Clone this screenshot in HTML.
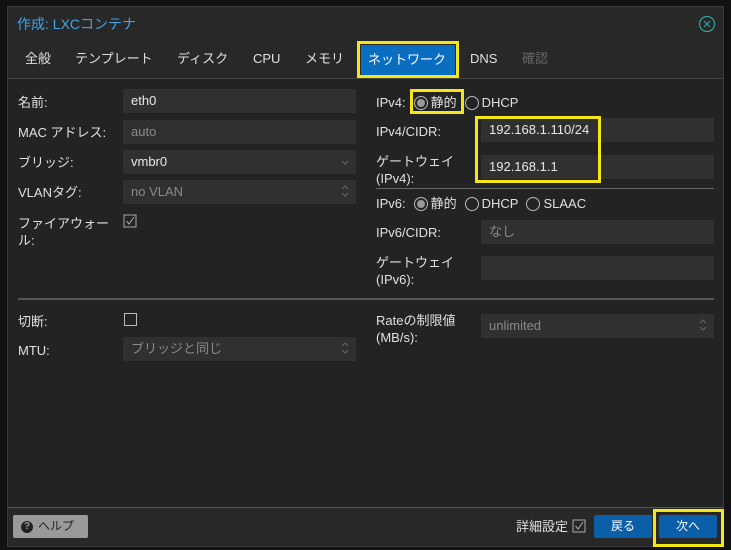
<!DOCTYPE html>
<html><head><meta charset="utf-8"><style>
*{box-sizing:border-box;margin:0;padding:0}
body{width:731px;height:550px;background:#121212;font-family:"Liberation Sans","Noto Sans CJK JP",sans-serif;font-size:13px;color:#e0e0e0;position:relative;overflow:hidden}
.a{position:absolute}
.dlg{left:7px;top:6px;width:717px;height:541px;background:#282828;border:1px solid #3a3a3a}
.in{position:absolute;height:24px;background:#303030;padding-left:8px;line-height:24px;font-size:13px;color:#e8e8e8;overflow:hidden}
.dim{color:#8a8a8a}
.lbl{position:absolute;color:#e0e0e0;font-size:13px;line-height:17px}
.tab{position:absolute;top:44px;height:30px;line-height:30px;font-size:13px;color:#e0e0e0}
.radio{display:inline-block;width:14px;height:14px;border:1px solid #bbb;border-radius:50%;vertical-align:-2px;position:relative;margin-right:3px}
.radio.on::after{content:"";position:absolute;left:2px;top:2px;width:8px;height:8px;border-radius:50%;background:#999}
.chk{position:absolute;width:13px;height:13px;border:1px solid #bbb}
.yb{position:absolute;border:3px solid #f5e61a}
.sp{position:absolute;right:6px;top:5px}
.row{display:flex;align-items:center;height:17px}
.row span.t{margin-right:8px}
</style></head><body>
<div class="a dlg"></div>
<div class="a" style="left:17px;top:15px;font-size:14px;line-height:18px;color:#3fa3e6">作成: LXCコンテナ</div>
<svg class="a" style="left:698px;top:15px" width="18" height="18"><circle cx="9" cy="9" r="7.5" fill="none" stroke="#2aa7a0" stroke-width="1.2"/><path d="M6 6L12 12M12 6L6 12" stroke="#2aa7a0" stroke-width="1.2"/></svg>
<div class="tab" style="left:25px">全般</div>
<div class="tab" style="left:75px">テンプレート</div>
<div class="tab" style="left:177px">ディスク</div>
<div class="tab" style="left:253px">CPU</div>
<div class="tab" style="left:305px">メモリ</div>
<div class="a" style="left:361px;top:45px;width:94px;height:30px;background:#0a6ec0"></div>
<div class="tab" style="left:368px;top:45px;color:#fff">ネットワーク</div>
<div class="tab" style="left:470px">DNS</div>
<div class="tab" style="left:522px;color:#666">確認</div>
<div class="a" style="left:8px;top:78px;width:715px;height:1px;background:#444"></div>
<div class="a" style="left:8px;top:79px;width:715px;height:428px;background:#232323"></div>

<svg width="0" height="0" style="position:absolute"><defs><g id="sp"><path d="M1 4L4 1L7 4M1 8L4 11L7 8" fill="none" stroke="#666" stroke-width="1"/></g></defs></svg>

<div class="lbl" style="left:18px;top:94px">名前:</div><div class="in" style="left:123px;top:89px;width:233px">eth0</div>
<div class="lbl" style="left:18px;top:124px">MAC アドレス:</div><div class="in dim" style="left:123px;top:120px;width:233px">auto</div>
<div class="lbl" style="left:18px;top:154px">ブリッジ:</div><div class="in" style="left:123px;top:150px;width:233px">vmbr0<svg class="sp" width="9" height="14"><path d="M1 6L4 9L7 6" fill="none" stroke="#666"/></svg></div>
<div class="lbl" style="left:18px;top:184px">VLANタグ:</div><div class="in dim" style="left:123px;top:180px;width:233px">no VLAN<svg class="sp" width="9" height="13"><use href="#sp"/></svg></div>
<div class="lbl" style="left:18px;top:215px">ファイアウォー<br>ル:</div>
<svg class="a" style="left:123px;top:214px" width="15" height="15"><rect x="1" y="1" width="12" height="12" fill="none" stroke="#aaa"/><path d="M3.5 7L6 10L11 3" fill="none" stroke="#aaa"/></svg>
<div class="a" style="left:18px;top:298px;width:696px;height:2px;background:#555"></div>
<div class="lbl" style="left:18px;top:313px">切断:</div><div class="chk" style="left:124px;top:313px"></div>
<div class="lbl" style="left:18px;top:342px">MTU:</div><div class="in dim" style="left:123px;top:337px;width:233px">ブリッジと同じ<svg class="sp" width="9" height="13"><use href="#sp"/></svg></div>

<div class="lbl row" style="left:376px;top:94px"><span class="t">IPv4:</span><span class="radio on"></span><span class="t">静的</span><span class="radio"></span><span>DHCP</span></div>
<div class="lbl" style="left:376px;top:123px">IPv4/CIDR:</div><div class="in" style="left:481px;top:118px;width:233px">192.168.1.110/24</div>
<div class="lbl" style="left:376px;top:153px">ゲートウェイ<br>(IPv4):</div><div class="in" style="left:481px;top:155px;width:233px">192.168.1.1</div>
<div class="a" style="left:376px;top:188px;width:338px;height:1px;background:#666"></div>
<div class="lbl row" style="left:376px;top:195px"><span class="t">IPv6:</span><span class="radio on"></span><span class="t">静的</span><span class="radio"></span><span class="t">DHCP</span><span class="radio"></span><span>SLAAC</span></div>
<div class="lbl" style="left:376px;top:224px">IPv6/CIDR:</div><div class="in dim" style="left:481px;top:220px;width:233px">なし</div>
<div class="lbl" style="left:376px;top:254px">ゲートウェイ<br>(IPv6):</div><div class="in" style="left:481px;top:256px;width:233px"></div>
<div class="lbl" style="left:376px;top:312px">Rateの制限値<br>(MB/s):</div><div class="in dim" style="left:481px;top:314px;width:233px">unlimited<svg class="sp" width="9" height="13"><use href="#sp"/></svg></div>

<div class="a" style="left:8px;top:507px;width:715px;height:1px;background:#555"></div>
<div class="a" style="left:13px;top:515px;width:75px;height:23px;background:#9a9a9a;border-radius:2px;color:#222;font-size:12px;line-height:23px;padding-left:8px;display:flex;align-items:center"><span style="display:inline-block;width:12px;height:12px;border-radius:50%;background:#222;color:#9a9a9a;font-size:10px;line-height:12px;text-align:center;font-weight:bold;margin-right:5px">?</span>ヘルプ</div>
<div class="a" style="left:516px;top:518px;font-size:13px;line-height:18px">詳細設定</div>
<svg class="a" style="left:572px;top:519px" width="15" height="15"><rect x="1" y="1" width="12" height="12" fill="none" stroke="#aaa"/><path d="M3.5 7L6 10L11 3" fill="none" stroke="#aaa"/></svg>
<div class="a" style="left:594px;top:515px;width:58px;height:23px;background:#0a5fa8;border-radius:2px;color:#fff;font-size:12px;line-height:23px;text-align:center">戻る</div>
<div class="a" style="left:659px;top:515px;width:58px;height:23px;background:#0a5fa8;border-radius:2px;color:#fff;font-size:12px;line-height:23px;text-align:center">次へ</div>

<div class="yb" style="left:357px;top:41px;width:102px;height:37px"></div>
<div class="yb" style="left:410px;top:89px;width:54px;height:25px"></div>
<div class="yb" style="left:475px;top:116px;width:126px;height:67px"></div>
<div class="yb" style="left:653px;top:509px;width:71px;height:38px"></div>
</body></html>
